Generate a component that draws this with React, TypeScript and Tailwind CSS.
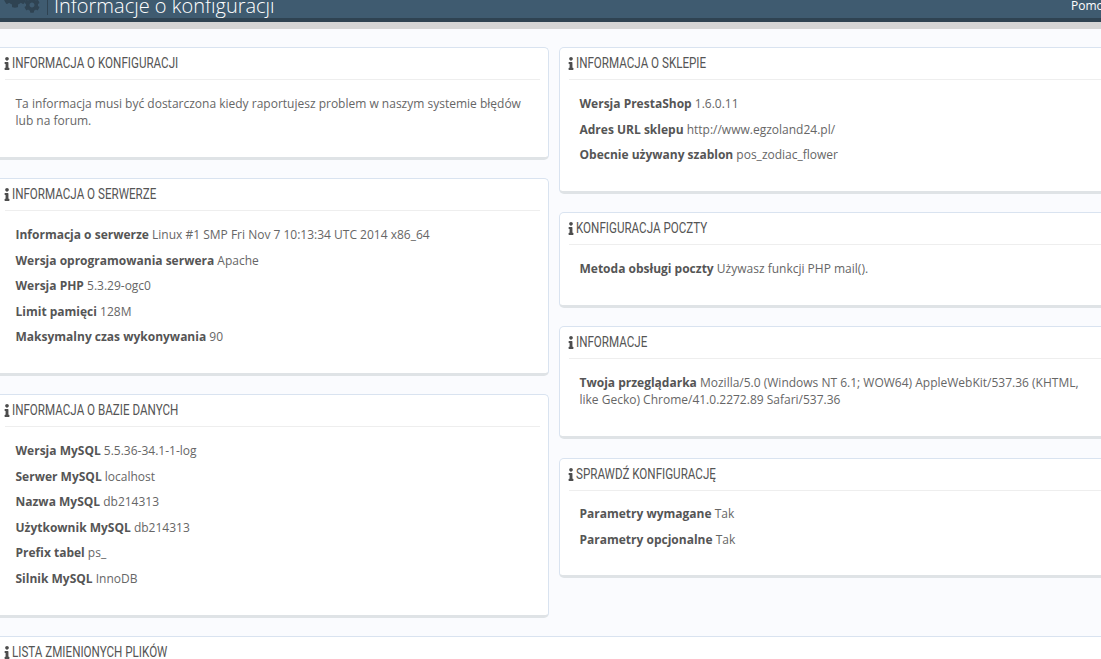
import { FaInfo, FaCog } from "react-icons/fa";
import type { ReactNode } from "react";

type Row = { label?: string; value: string };

const Panel = ({ title, rows, className, children }: { title: string; rows?: Row[]; className: string; children?: ReactNode }) => (
  <section className={`bg-white border border-[#d9e3f0] border-b-[3px] border-b-[#dfe3e6] rounded-[5px] px-[19.5px] ${className}`}>
    <h3 className="-mx-[11px] h-[32px] border-b border-[#eeeeee] flex items-center gap-[1px] text-[#555555] text-[14px] uppercase font-['Roboto',sans-serif] whitespace-nowrap">
      <FaInfo className="w-[8px] h-[13px] -ml-[2px] text-[#4d4d4d]" />
      <span className="inline-block origin-left scale-x-[0.83] font-normal">{title}</span>
    </h3>
    <div className="pt-[15px]">
      {children}
      {rows?.map((row) => (
        <p key={row.label} className="mb-[8.6px] leading-[17px]">
          <b className="font-bold text-[#555555]">{row.label}</b> {row.value}
        </p>
      ))}
    </div>
  </section>
);

export default function App() {
  return (
    <div className="h-[659px] w-[1101px] overflow-hidden bg-[#fafbfe] text-[12px] text-[#666666] font-['Open_Sans',sans-serif]">
      <header className="h-[22px] bg-[#3f5b70] border-b-[4px] border-[#2f4352] flex items-end justify-between overflow-hidden">
        <div className="flex items-start h-[18px]">
          <FaCog className="w-[24px] h-[24px] ml-[3px] -mt-[16px] shrink-0 text-[#2f4352]" />
          <FaCog className="w-[16px] h-[16px] -ml-[3px] -mt-[3px] shrink-0 text-[#2f4352]" />
          <span className="ml-[7px] h-[15px] w-px bg-[#2f4352]" />
          <span className="ml-[6px] -mt-[8px] text-[20px] font-light leading-[28px] text-white whitespace-nowrap">Informacje o konfiguracji</span>
        </div>
        <span className="h-[18px] -mr-[20px] w-[50px] text-[12px] leading-[12px] text-white whitespace-nowrap overflow-hidden">Pomoc</span>
      </header>
      <div className="h-[7px] bg-[#d5d5d5]" />

      <main className="-ml-[5px] w-[1118px] pt-[18px] grid grid-cols-2 gap-x-[10px]">
        <div className="flex flex-col gap-[18px]">
          <Panel title="Informacja o konfiguracji" className="h-[113px]">
            <p className="leading-[17px]">Ta informacja musi być dostarczona kiedy raportujesz problem w naszym systemie błędów lub na forum.</p>
          </Panel>
          <Panel
            title="Informacja o serwerze"
            className="h-[198px]"
            rows={[
              { label: "Informacja o serwerze", value: "Linux #1 SMP Fri Nov 7 10:13:34 UTC 2014 x86_64" },
              { label: "Wersja oprogramowania serwera", value: "Apache" },
              { label: "Wersja PHP", value: "5.3.29-ogc0" },
              { label: "Limit pamięci", value: "128M" },
              { label: "Maksymalny czas wykonywania", value: "90" },
            ]}
          />
          <Panel
            title="Informacja o bazie danych"
            className="h-[224px]"
            rows={[
              { label: "Wersja MySQL", value: "5.5.36-34.1-1-log" },
              { label: "Serwer MySQL", value: "localhost" },
              { label: "Nazwa MySQL", value: "db214313" },
              { label: "Użytkownik MySQL", value: "db214313" },
              { label: "Prefix tabel", value: "ps_" },
              { label: "Silnik MySQL", value: "InnoDB" },
            ]}
          />
        </div>
        <div className="flex flex-col gap-[18px]">
          <Panel
            title="Informacja o sklepie"
            className="h-[147px]"
            rows={[
              { label: "Wersja PrestaShop", value: "1.6.0.11" },
              { label: "Adres URL sklepu", value: "http://www.egzoland24.pl/" },
              { label: "Obecnie używany szablon", value: "pos_zodiac_flower" },
            ]}
          />
          <Panel title="Konfiguracja poczty" className="h-[96px]" rows={[{ label: "Metoda obsługi poczty", value: "Używasz funkcji PHP mail()." }]} />
          <Panel
            title="Informacje"
            className="h-[113px]"
            rows={[{ label: "Twoja przeglądarka", value: "Mozilla/5.0 (Windows NT 6.1; WOW64) AppleWebKit/537.36 (KHTML, like Gecko) Chrome/41.0.2272.89 Safari/537.36" }]}
          />
          <Panel
            title="Sprawdź konfigurację"
            className="h-[120px] mt-[1px] [&>div]:pt-[14px]"
            rows={[
              { label: "Parametry wymagane", value: "Tak" },
              { label: "Parametry opcjonalne", value: "Tak" },
            ]}
          />
        </div>
      </main>

      <div className="mt-[18px] -ml-[5px] w-[1118px]">
        <Panel title="Lista zmienionych plików" className="h-[60px]" />
      </div>
    </div>
  );
}
